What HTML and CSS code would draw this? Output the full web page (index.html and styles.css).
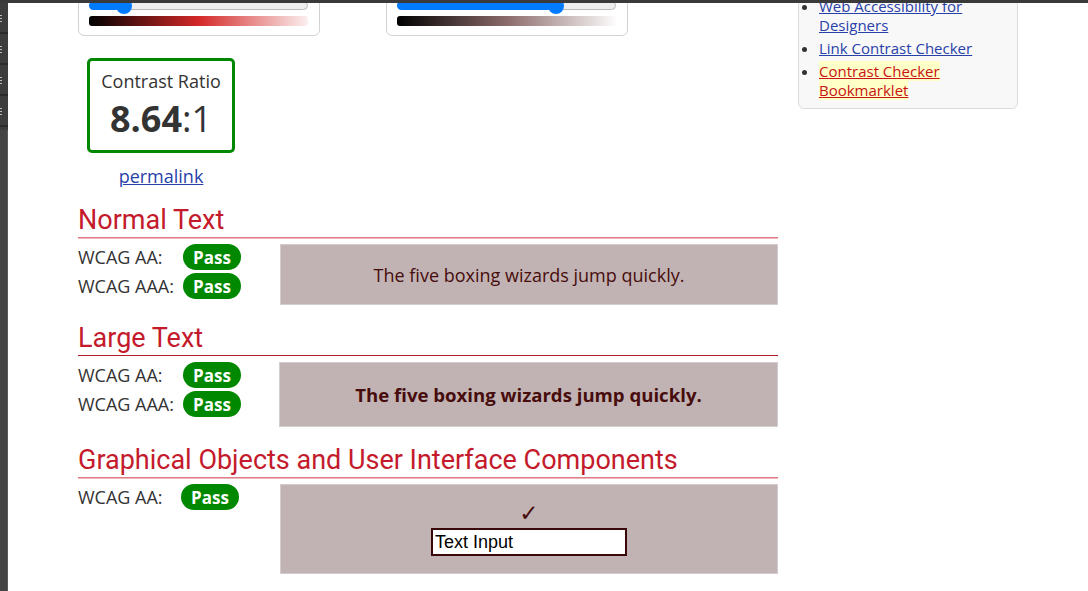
FILE: index.html
```html
<!DOCTYPE html>
<html lang="en">
<head>
<meta charset="utf-8">
<title>Contrast Checker</title>
<link rel="stylesheet" href="styles.css">
</head>
<body>
<div class="topbar"></div>
<div class="frame">
  <div class="toolstrip">
    <div class="tool-seg"><span class="grip"></span></div>
    <div class="tool-seg"><span class="grip"></span></div>
    <div class="tool-seg"><span class="grip"></span></div>
    <div class="tool-seg"><span class="grip"></span></div>
    <div class="tool-panel"></div>
  </div>
  <div class="viewport">
    <div class="container">
      <main class="main">
        <div class="cards">
          <div class="card">
            <div class="slider">
              <div class="fill" style="width:35px"></div>
              <div class="thumb" style="left:34px"></div>
            </div>
            <div class="grad grad-red"></div>
          </div>
          <div class="card">
            <div class="slider">
              <div class="fill" style="width:159px"></div>
              <div class="thumb" style="left:158px"></div>
            </div>
            <div class="grad grad-neutral"></div>
          </div>
        </div>

        <div class="ratio-col">
          <div class="ratio-box">
            <div class="ratio-label">Contrast Ratio</div>
            <div class="ratio-value"><b>8.64</b>:1</div>
          </div>
          <div class="permalink-wrap"><a class="permalink" href="#">permalink</a></div>
        </div>

        <section class="sec">
          <h2 class="sec-title sec-title-soft">Normal Text</h2>
          <div class="sec-body">
            <div class="results">
              <div class="row"><span class="lbl">WCAG AA:</span><span class="pass">Pass</span></div>
              <div class="row"><span class="lbl">WCAG AAA:</span><span class="pass">Pass</span></div>
            </div>
            <div class="sample sample-normal">The five boxing wizards jump quickly.</div>
          </div>
        </section>

        <section class="sec">
          <h2 class="sec-title sec-title-strong">Large Text</h2>
          <div class="sec-body">
            <div class="results">
              <div class="row"><span class="lbl">WCAG AA:</span><span class="pass">Pass</span></div>
              <div class="row"><span class="lbl">WCAG AAA:</span><span class="pass">Pass</span></div>
            </div>
            <div class="sample sample-large">The five boxing wizards jump quickly.</div>
          </div>
        </section>

        <section class="sec">
          <h2 class="sec-title sec-title-soft">Graphical Objects and User Interface Components</h2>
          <div class="sec-body">
            <div class="results">
              <div class="row"><span class="lbl lbl-narrow">WCAG AA:</span><span class="pass">Pass</span></div>
            </div>
            <div class="sample sample-ui">
              <div class="check">✓</div>
              <input class="text-input" type="text" value="Text Input" readonly>
            </div>
          </div>
        </section>
      </main>

      <aside class="sidebar">
        <ul class="links">
          <li><a href="#">Web Accessibility for Designers</a></li>
          <li><a href="#">Link Contrast Checker</a></li>
          <li><a class="current" href="#">Contrast Checker Bookmarklet</a></li>
        </ul>
      </aside>
    </div>
  </div>
</div>
</body>
</html>
```
FILE: styles.css
```css
html, body {
  margin: 0;
  padding: 0;
}

body {
  font-family: "Open Sans", "DejaVu Sans", sans-serif;
  color: #333;
  background: #fff;
  overflow: hidden;
}

.topbar {
  height: 3px;
  background: #3a3a3a;
}

.frame {
  display: flex;
  height: 588px;
}

/* left app tool strip */
.toolstrip {
  width: 8px;
  flex: none;
  background: #3d3d3d;
  display: flex;
  flex-direction: column;
}

.tool-seg {
  height: 29px;
  border-bottom: 2px solid #2b2b2b;
  display: flex;
  align-items: center;
}

.grip {
  width: 2px;
  height: 8px;
  background: radial-gradient(circle, #bdbdbd 0.8px, transparent 1px) 0 0 / 2px 3px repeat-y;
}

.tool-panel {
  flex: 1;
  margin-top: 3px;
  background: #444;
  border-right: 1px solid #5a5a5a;
}

.viewport {
  flex: 1;
  overflow: hidden;
}

.container {
  width: 940px;
  margin: -24px auto 0;
  display: flex;
  gap: 20px;
  align-items: flex-start;
}

.main {
  width: 700px;
  flex: none;
}

/* colour slider cards */
.cards {
  display: flex;
  gap: 66px;
}

.card {
  width: 242px;
  box-sizing: border-box;
  border: 1px solid #d2d2d2;
  border-radius: 6px;
  padding: 21px 11px 9px 10px;
}

.slider {
  position: relative;
  height: 9px;
  box-sizing: border-box;
  border: 1px solid #bbb;
  background: #eee;
  border-radius: 5px;
}

.fill {
  position: absolute;
  left: -1px;
  top: -1px;
  bottom: -1px;
  background: #007bff;
  border-radius: 5px;
}

.thumb {
  position: absolute;
  top: -4px;
  width: 16px;
  height: 16px;
  margin-left: -8px;
  border-radius: 50%;
  background: #007bff;
}

.grad {
  height: 10px;
  margin-top: 6px;
  border-radius: 3px;
}

.grad-red {
  background: linear-gradient(to right, #000 0%, #d42828 50%, #fcf0f0 100%);
}

.grad-neutral {
  background: linear-gradient(to right, #000 0%, #8b6a6a 50%, #fdfcfc 100%);
}

/* contrast ratio */
.ratio-col {
  width: 166px;
  margin-top: 22px;
  text-align: center;
}

.ratio-box {
  width: 148px;
  height: 95px;
  margin: 0 auto;
  box-sizing: border-box;
  border: 3px solid #008800;
  border-radius: 5px;
  padding-top: 8px;
}

.ratio-label {
  font-size: 18px;
  line-height: 24px;
  color: #333;
}

.ratio-value {
  font-size: 36px;
  line-height: 52px;
  color: #333;
}

.ratio-value b {
  font-weight: 700;
}

.permalink-wrap {
  margin-top: 11px;
  font-size: 18px;
  line-height: 24px;
}

.permalink {
  color: #2841a8;
}

/* result sections */
.sec {
  margin-top: 17px;
}

.sec + .sec {
  margin-top: 18px;
}

.sec-title {
  margin: 0;
  font-family: Roboto, "Liberation Sans", sans-serif;
  font-weight: 400;
  font-size: 27px;
  line-height: 30px;
  padding-bottom: 2px;
  color: #c41a2c;
}

.sec-title-soft {
  border-bottom: 1px solid #de7d86;
  box-shadow: 0 1px 0 #eeb6ba;
}

.sec-title-strong {
  border-bottom: 1px solid #b01c2a;
}

.sec-body {
  margin-top: 6px;
  display: flex;
}

.results {
  width: 202px;
  flex: none;
  display: flex;
  flex-direction: column;
  gap: 3px;
}

.row {
  display: flex;
  align-items: center;
  height: 26px;
}

.lbl {
  width: 105px;
  font-size: 18px;
  color: #333;
}

.lbl-narrow {
  width: 103px;
}

.pass {
  display: inline-flex;
  align-items: center;
  justify-content: center;
  width: 58px;
  height: 26px;
  border-radius: 13px;
  background: #008800;
  color: #fff;
  font-weight: 700;
  font-size: 17px;
}

.sample {
  flex: 1;
  box-sizing: border-box;
  background: #c1b3b3;
  border: 1px solid #d3cdcd;
  color: #470c0c;
  display: flex;
  align-items: center;
  justify-content: center;
}

.sample-normal {
  height: 61px;
  font-size: 18px;
}

.sample-large {
  height: 65px;
  margin-left: -1px;
  font-size: 18.6px;
  font-weight: 700;
}

.sample-ui {
  height: 90px;
  flex-direction: column;
  justify-content: flex-start;
  padding-top: 15px;
}

.check {
  font-family: "DejaVu Sans", sans-serif;
  font-weight: 700;
  font-size: 23px;
  line-height: 26px;
  height: 26px;
  color: #470c0c;
}

.text-input {
  margin-top: 2px;
  width: 196px;
  height: 28px;
  box-sizing: border-box;
  border: 2px solid #3a0808;
  border-radius: 0;
  padding: 0 2px;
  background: #fff;
  color: #000;
  font-family: "Liberation Sans", Arial, sans-serif;
  font-size: 18px;
  outline: none;
}

/* sidebar */
.sidebar {
  width: 220px;
  flex: none;
  box-sizing: border-box;
  background: #f8f8f8;
  border: 1px solid #dcdcdc;
  border-radius: 6px;
  padding: 17px 10px 8px 0;
}

.links {
  margin: 0;
  padding-left: 20px;
  font-size: 15px;
  line-height: 19px;
  color: #333;
}

.links li + li {
  margin-top: 4px;
}

.links a {
  color: #2841a8;
}

.links a.current {
  color: #c81414;
  background: #ffffc8;
}
```
